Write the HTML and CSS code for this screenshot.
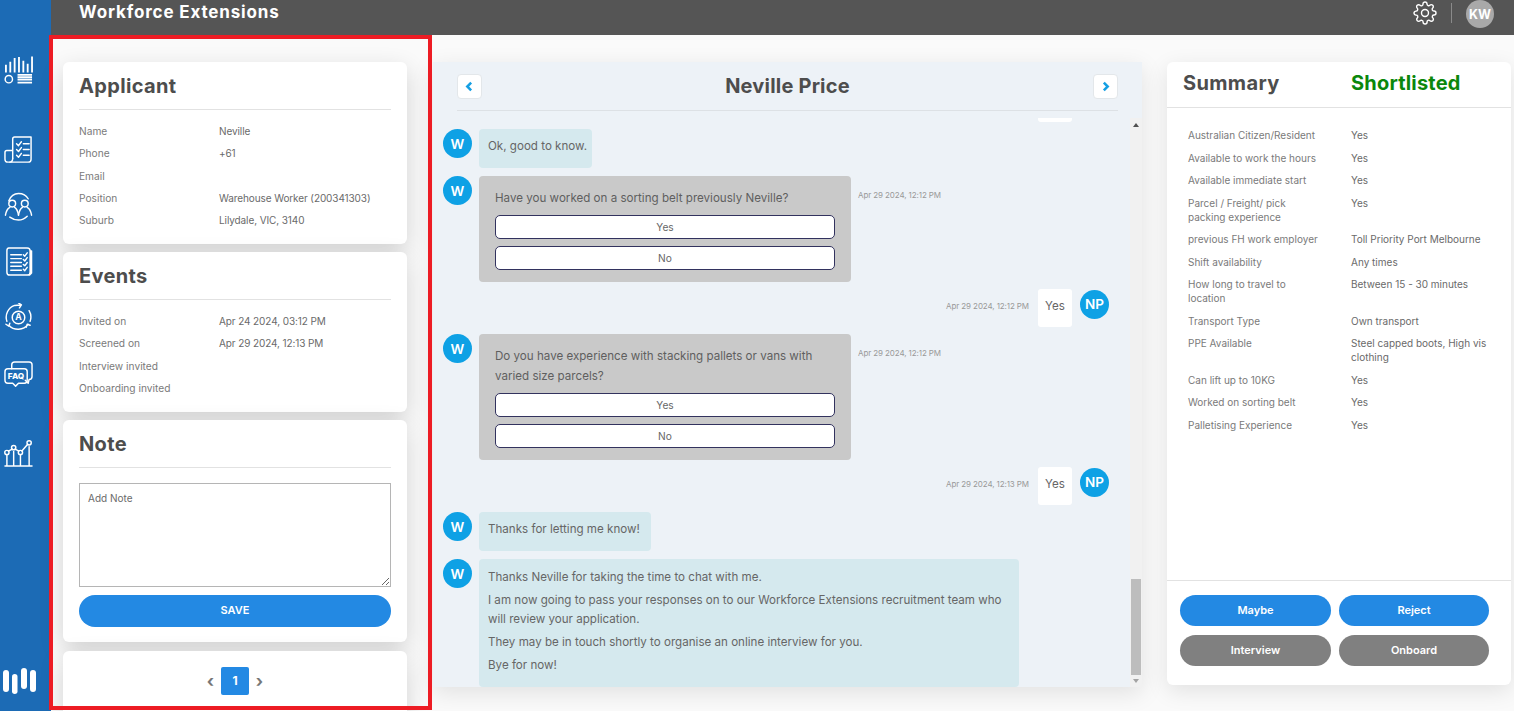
FILE: index.html
```html
<!DOCTYPE html>
<html lang="en">
<head>
<meta charset="utf-8">
<title>Workforce Extensions</title>
<link rel="stylesheet" href="styles.css">
</head>
<body>
<div class="app">
  <aside class="sidebar">
    <svg class="nav nav-a" viewBox="0 0 30 30"><g class="ln ln-bars"><path d="M2 17V9M6.500 17V6M11 17V2M15.500 17V1M20 17V5M24.500 17V8M29 17V.5"/><path d="M14 19.500h15M14 22h15M14 24.500h15M14 27.500h15"/></g><g class="ln"><circle cx="5" cy="24" r="3.800"/></g></svg>
    <svg class="nav nav-b" viewBox="0 0 30 30"><g class="ln"><path d="M9 23V3q0-2 2-2h17v23q0 3-3 3H4q-3 0-3-3v-7q0-2 2-2h6"/><path d="M9 23q0 4-3 4M13 8l2 2 3-4M20 8h6M13 14l2 2 3-4M20 14h6M13 20l2 2 3-4M20 20h6"/></g></svg>
    <svg class="nav nav-c" viewBox="0 0 30 30"><g class="ln"><circle cx="8.500" cy="12" r="3.500"/><path d="M1.500 24q1-6 4.500-8M15 24q-1-6-4-8"/><circle cx="21.500" cy="12" r="3.500"/><path d="M15 24q1-6 4-8M28.500 24q-1-6-4.500-8M5 9q3-7.500 10-7.500T25 7M6 26q4 3 9 3t9-4"/></g></svg>
    <svg class="nav nav-d" viewBox="0 0 30 30"><g class="ln"><path d="M5 1h19q3 0 3 3v22q0 3-3 3H6q-3 0-3-3V4q0-3 2-3zM27 4h1.500v23l-2 2"/><path d="M7 8h11M7 12h11M7 16h11M7 20h11M7 24h11M20 8l1.500 1.500L24 6M20 13l1.500 1.500L24 11M20 18l1.500 1.500L24 16M20 23l1.500 1.500L24 21"/></g></svg>
    <svg class="nav nav-e" viewBox="0 0 30 30"><g class="ln"><path d="M3 19A13 13 0 0 1 11 2.500l6-.5M26 8a13 13 0 0 1 1 11M5 23a13 13 0 0 0 20-1M15 0l3 2-2 3M27 23l-3-1-1 3M2 22l3 2 1-3"/><circle cx="15" cy="15" r="6.500"/></g><text class="a-mark" x="15" y="18">A</text></svg>
    <svg class="nav nav-f" viewBox="0 0 30 30"><g class="ln"><path d="M8 8V4q0-3 3-3h15q3 0 3 3v12q0 3-3 3l-1 4-3-3"/><path d="M4 8h17q3 0 3 3v9q0 3-3 3h-6l-3 3-3-3H4q-3 0-3-3v-9q0-3 3-3z"/></g><text class="faq-mark" x="12.500" y="19">FAQ</text></svg>
    <svg class="nav nav-g" viewBox="0 0 30 30"><g class="ln"><path d="M1 29h28M3 29V17M10 29V14M17 29V17M26 29V9"/><circle cx="3" cy="15" r="2.200"/><circle cx="10" cy="10" r="2.200"/><circle cx="17" cy="15" r="2.200"/><circle cx="26" cy="5" r="2.200"/><path d="M4.500 13.500l4-2M11.500 11.500l4 2M18.500 13.500l6-7"/></g></svg>
    <svg class="nav-logo" viewBox="0 0 34 26"><g class="logo-bars"><rect x="0" y="2" width="6" height="22" rx="3"/><rect x="9" y="6" width="5.500" height="20" rx="2.750"/><rect x="18" y="0" width="6" height="21" rx="3"/><rect x="27" y="2" width="6" height="22" rx="3"/></g></svg>
  </aside>

  <div class="main">
    <header class="topbar">
      <div class="brand">Workforce Extensions</div>
      <div class="top-actions">
        <svg class="gear" viewBox="0 0 24 24"><circle cx="12" cy="12" r="3.500"/><path d="M19.400 15a1.650 1.650 0 0 0 .33 1.820l.06.06a2 2 0 0 1 0 2.830 2 2 0 0 1-2.830 0l-.06-.06a1.650 1.650 0 0 0-1.820-.33 1.650 1.650 0 0 0-1 1.510V21a2 2 0 0 1-2 2 2 2 0 0 1-2-2v-.09A1.650 1.650 0 0 0 9 19.400a1.650 1.650 0 0 0-1.820.33l-.06.06a2 2 0 0 1-2.830 0 2 2 0 0 1 0-2.830l.06-.06a1.650 1.650 0 0 0 .33-1.820 1.650 1.650 0 0 0-1.510-1H3a2 2 0 0 1-2-2 2 2 0 0 1 2-2h.09A1.650 1.650 0 0 0 4.600 9a1.650 1.650 0 0 0-.33-1.820l-.06-.06a2 2 0 0 1 0-2.830 2 2 0 0 1 2.830 0l.06.06a1.650 1.650 0 0 0 1.820.33H9a1.650 1.650 0 0 0 1-1.510V3a2 2 0 0 1 2-2 2 2 0 0 1 2 2v.09a1.650 1.650 0 0 0 1 1.510 1.650 1.650 0 0 0 1.820-.33l.06-.06a2 2 0 0 1 2.830 0 2 2 0 0 1 0 2.830l-.06.06a1.650 1.650 0 0 0-.33 1.820V9a1.650 1.650 0 0 0 1.510 1H21a2 2 0 0 1 2 2 2 2 0 0 1-2 2h-.09a1.650 1.650 0 0 0-1.510 1z"/></svg>
        <span class="divider"></span>
        <span class="user-avatar">KW</span>
      </div>
    </header>

    <div class="content">
      <div class="left-col">
        <section class="card">
          <h2 class="card-title">Applicant</h2>
          <div class="rows">
            <div class="row"><span class="key">Name</span><span class="val">Neville</span></div>
            <div class="row"><span class="key">Phone</span><span class="val">+61</span></div>
            <div class="row"><span class="key">Email</span><span class="val"></span></div>
            <div class="row"><span class="key">Position</span><span class="val">Warehouse Worker (200341303)</span></div>
            <div class="row"><span class="key">Suburb</span><span class="val">Lilydale, VIC, 3140</span></div>
          </div>
        </section>
        <section class="card">
          <h2 class="card-title">Events</h2>
          <div class="rows">
            <div class="row"><span class="key">Invited on</span><span class="val">Apr 24 2024, 03:12 PM</span></div>
            <div class="row"><span class="key">Screened on</span><span class="val">Apr 29 2024, 12:13 PM</span></div>
            <div class="row"><span class="key">Interview invited</span><span class="val"></span></div>
            <div class="row"><span class="key">Onboarding invited</span><span class="val"></span></div>
          </div>
        </section>
        <section class="card note-card">
          <h2 class="card-title">Note</h2>
          <textarea class="note" placeholder="Add Note"></textarea>
          <button class="save">SAVE</button>
        </section>
        <section class="card pager-card">
          <div class="pager">
            <span class="pg-arrow">&#8249;</span>
            <span class="pg-num">1</span>
            <span class="pg-arrow">&#8250;</span>
          </div>
        </section>
      </div>

      <section class="chat">
        <div class="chat-head">
          <button class="chev"><svg viewBox="0 0 10 10"><path d="M6.500 1.500L3 5l3.500 3.500"/></svg></button>
          <h1 class="chat-name">Neville Price</h1>
          <button class="chev"><svg viewBox="0 0 10 10"><path d="M3.500 1.500L7 5 3.500 8.500"/></svg></button>
        </div>
        <div class="chat-body">
          <div class="messages">
            <div class="msg me"><div class="bubble-me"></div><span class="av av-empty"></span></div>
            <div class="msg"><span class="av">W</span><div class="bubble b-short b-ok">Ok, good to know.</div></div>
            <div class="msg">
              <span class="av">W</span>
              <div class="bubble-q">
                <p class="q">Have you worked on a sorting belt previously Neville?</p>
                <button class="opt">Yes</button>
                <button class="opt">No</button>
              </div>
              <span class="time t-q">Apr 29 2024, 12:12 PM</span>
            </div>
            <div class="msg me"><span class="time">Apr 29 2024, 12:12 PM</span><div class="bubble-me">Yes</div><span class="av">NP</span></div>
            <div class="msg">
              <span class="av">W</span>
              <div class="bubble-q">
                <p class="q">Do you have experience with stacking pallets or vans with<br>varied size parcels?</p>
                <button class="opt">Yes</button>
                <button class="opt">No</button>
              </div>
              <span class="time t-q">Apr 29 2024, 12:12 PM</span>
            </div>
            <div class="msg me"><span class="time">Apr 29 2024, 12:13 PM</span><div class="bubble-me">Yes</div><span class="av">NP</span></div>
            <div class="msg"><span class="av">W</span><div class="bubble b-short b-thanks">Thanks for letting me know!</div></div>
            <div class="msg">
              <span class="av">W</span>
              <div class="bubble b-long">
                <p>Thanks Neville for taking the time to chat with me.</p>
                <p>I am now going to pass your responses on to our Workforce Extensions recruitment team who<br>will review your application.</p>
                <p>They may be in touch shortly to organise an online interview for you.</p>
                <p>Bye for now!</p>
              </div>
            </div>
          </div>
          <div class="scrollbar">
            <span class="sb-up"></span>
            <span class="sb-thumb"></span>
            <span class="sb-down"></span>
          </div>
        </div>
      </section>

      <section class="summary">
        <div class="sum-head"><h2 class="sum-title">Summary</h2><span class="sum-status">Shortlisted</span></div>
        <div class="sum-rows">
          <div class="sum-row"><span class="key">Australian Citizen/Resident</span><span class="val">Yes</span></div>
          <div class="sum-row"><span class="key">Available to work the hours</span><span class="val">Yes</span></div>
          <div class="sum-row"><span class="key">Available immediate start</span><span class="val">Yes</span></div>
          <div class="sum-row"><span class="key">Parcel / Freight/ pick<br>packing experience</span><span class="val">Yes</span></div>
          <div class="sum-row"><span class="key">previous FH work employer</span><span class="val">Toll Priority Port Melbourne</span></div>
          <div class="sum-row"><span class="key">Shift availability</span><span class="val">Any times</span></div>
          <div class="sum-row"><span class="key">How long to travel to<br>location</span><span class="val">Between 15 - 30 minutes</span></div>
          <div class="sum-row"><span class="key">Transport Type</span><span class="val">Own transport</span></div>
          <div class="sum-row"><span class="key">PPE Available</span><span class="val">Steel capped boots, High vis<br>clothing</span></div>
          <div class="sum-row"><span class="key">Can lift up to 10KG</span><span class="val">Yes</span></div>
          <div class="sum-row"><span class="key">Worked on sorting belt</span><span class="val">Yes</span></div>
          <div class="sum-row"><span class="key">Palletising Experience</span><span class="val">Yes</span></div>
        </div>
        <div class="sum-actions">
          <button class="pill blue">Maybe</button>
          <button class="pill blue">Reject</button>
          <button class="pill grey">Interview</button>
          <button class="pill grey">Onboard</button>
        </div>
      </section>
    </div>
    <div class="highlight"></div>
  </div>
</div>
</body>
</html>
```
FILE: styles.css
```css
* { box-sizing: border-box; }
html, body { margin: 0; height: 711px; overflow: hidden; background: #fff; }
body { font-family: Inter, "Liberation Sans", sans-serif; color: #666; }
h1, h2, p { margin: 0; }
button { font-family: inherit; cursor: pointer; }

.app { display: flex; height: 711px; }

/* sidebar */
.sidebar { width: 51px; flex: none; background: #1c6bb5; display: flex; flex-direction: column; padding-left: 4px; }
.nav { width: 29px; height: 29px; display: block; flex: none; }
.ln { fill: none; stroke: #fff; stroke-width: 1.500; stroke-linecap: round; stroke-linejoin: round; }
.ln-bars { stroke-width: 1.900; stroke-linecap: butt; }
.nav-a { margin-top: 56px; }
.nav-b { margin-top: 51px; }
.nav-c { margin-top: 27px; }
.nav-d { margin-top: 26px; }
.nav-e { margin-top: 27px; }
.nav-f { margin-top: 29px; }
.nav-g { margin-top: 48px; }
.a-mark { fill: #fff; font-family: Inter, sans-serif; font-size: 9px; font-weight: 700; text-anchor: middle; }
.faq-mark { fill: #fff; font-family: Inter, sans-serif; font-size: 8.500px; font-weight: 800; text-anchor: middle; }
.nav-logo { width: 34px; height: 26px; margin: 201px 0 0 -1px; flex: none; display: block; }
.logo-bars { fill: #fff; }

/* top bar */
.main { flex: 1; min-width: 0; position: relative; display: flex; flex-direction: column; }
.topbar { height: 35px; flex: none; background: #555; display: flex; justify-content: space-between; padding: 0 20px 0 28px; }
.brand { color: #fff; font-size: 17px; font-weight: 700; line-height: 24px; letter-spacing: .85px; }
.top-actions { display: flex; align-items: flex-start; }
.gear { width: 24px; height: 24px; margin-top: 1px; fill: none; stroke: #fff; stroke-width: 1.400; }
.divider { width: 1px; height: 20px; background: #8a8a8a; margin: 3px 14px 0; }
.user-avatar { width: 28px; height: 28px; border-radius: 50%; background: #a9a9a9; color: #fff; font-size: 12.500px; font-weight: 700; display: flex; align-items: center; justify-content: center; }

/* content */
.content { flex: 1; min-height: 0; display: flex; align-items: flex-start; padding: 27px 0 0 12px; background: #fafafa; }
.highlight { position: absolute; left: -2px; top: 35px; width: 383px; height: 675px; border: 4px solid #ed1c24; pointer-events: none; }

.left-col { width: 344px; flex: none; display: flex; flex-direction: column; gap: 8px; }
.card { background: #fff; border-radius: 6px; padding: 0 16px; box-shadow: 0 8px 24px rgba(0,0,0,.16); }
.card-title { height: 48px; border-bottom: 1px solid #e2e2e2; font-size: 20px; line-height: 49px; font-weight: 700; color: #4d4d4d; letter-spacing: .35px; }
.rows { padding: 10px 0 12.500px; }
.row { display: flex; height: 22.300px; align-items: center; font-size: 10.200px; }
.key { color: #7a7a7a; }
.row .key { width: 140px; flex: none; }
.val { color: #6a6a6a; }
.row .val { font-size: 10px; letter-spacing: -.1px; }
.note-card { display: flex; flex-direction: column; padding-bottom: 15px; }
.note { display: block; width: 100%; height: 104px; margin-top: 15px; padding: 8px; border: 1px solid #b5b5b5; border-radius: 0; font-family: inherit; font-size: 10px; color: #666; background: #fff; }
.note::placeholder { color: #6a6a6a; opacity: 1; }
.save { height: 32px; margin-top: 8px; padding: 0 0 2px; border: 0; border-radius: 16px; background: #2389e3; color: #fff; font-size: 11px; font-weight: 600; }
.pager-card { height: 70px; margin-top: 1px; padding-top: 16px; }
.pager { display: flex; justify-content: center; align-items: center; height: 28px; }
.pg-arrow { width: 21px; text-align: center; color: #777; font-size: 17px; font-weight: 700; line-height: 22px; }
.pg-num { width: 28px; height: 28px; border-radius: 2px; background: #2389e3; color: #fff; font-size: 12px; font-weight: 700; display: flex; align-items: center; justify-content: center; }

/* chat */
.chat { width: 709px; height: 625px; flex: none; margin-left: 26px; background: #edf2f7; box-shadow: 0 6px 22px rgba(0,0,0,.1); display: flex; flex-direction: column; }
.chat-head { height: 49px; flex: none; margin: 0 24px; padding: 12px 0 0; border-bottom: 1px solid #dde1e5; display: flex; justify-content: space-between; align-items: flex-start; }
.chat-name { font-size: 20px; line-height: 25px; font-weight: 700; color: #4d4d4d; letter-spacing: .2px; }
.chev { width: 25px; height: 25px; padding: 6px; background: #fff; border: 1px solid #e3e7ea; border-radius: 4px; display: block; }
.chev svg { display: block; width: 11px; height: 11px; fill: none; stroke: #149fe3; stroke-width: 2.300; }
.chat-body { flex: 1; min-height: 0; margin-top: 7px; display: flex; }
.messages { flex: 1; min-width: 0; height: 100%; overflow: hidden; padding: 0 21px 0 10px; display: flex; flex-direction: column; justify-content: flex-end; gap: 7.700px; font-size: 11.600px; }
.msg { display: flex; align-items: flex-start; flex: none; }
.me { justify-content: flex-end; }
.av { width: 29px; height: 29px; flex: none; border-radius: 50%; background: #0ea1e5; color: #fff; font-size: 13.500px; font-weight: 600; display: flex; align-items: center; justify-content: center; }
.av-empty { background: transparent; }
.bubble { margin-left: 7px; background: #d5e9ee; border-radius: 4px; color: #666; line-height: 19px; }
.b-short { padding: 8px 0 12px 9px; height: 39px; white-space: nowrap; }
.b-ok { width: 113px; }
.b-thanks { width: 172px; }
.b-long { width: 540px; height: 128px; padding: 8.500px 8px 0 9px; }
.b-long p { margin-bottom: 4.300px; }
.bubble-q { width: 372px; margin-left: 7px; padding: 13px 16px 12px; background: #c9c9c9; border-radius: 4px; display: flex; flex-direction: column; gap: 7px; }
.q { color: #5f5f5f; line-height: 19.500px; margin-bottom: -.5px; }
.opt { height: 24px; padding: 0; background: #fff; border: 1px solid #32325e; border-radius: 5px; color: #666; font-size: 10.200px; }
.bubble-me { width: 34px; height: 38px; margin: -1px 8px 0 9px; padding-bottom: 4px; background: #fff; border-radius: 3px; display: flex; align-items: center; justify-content: center; color: #666; }
.time { font-size: 8px; color: #999; letter-spacing: -.1px; margin-top: 11px; }
.t-q { margin-left: 7px; margin-top: 14px; }

.scrollbar { width: 12px; flex: none; background: #f1f1f1; display: flex; flex-direction: column; align-items: center; justify-content: flex-end; padding: 5px 1px 4px; }
.sb-up { margin-bottom: auto; width: 0; height: 0; border: 3.500px solid transparent; border-top: 0; border-bottom: 4px solid #505050; }
.sb-thumb { width: 10px; height: 96px; background: #bdbdbd; }
.sb-down { width: 0; height: 0; margin-top: 4px; border: 3.500px solid transparent; border-bottom: 0; border-top: 4px solid #a3a3a3; }

/* summary */
.summary { width: 344px; height: 623px; flex: none; margin-left: 25px; background: #fff; border-radius: 6px; box-shadow: 0 6px 22px rgba(0,0,0,.1); display: flex; flex-direction: column; }
.sum-head { height: 46px; flex: none; border-bottom: 1px solid #e2e2e2; padding: 8px 0 0 16px; display: flex; align-items: flex-start; }
.sum-title { width: 168px; flex: none; font-size: 20px; line-height: 26px; font-weight: 700; color: #4d4d4d; letter-spacing: .35px; }
.sum-status { font-size: 20px; line-height: 26px; font-weight: 700; color: #0b870b; letter-spacing: .2px; }
.sum-rows { flex: 1; padding: 20px 0 0 21px; font-size: 10px; line-height: 14px; }
.sum-row { display: flex; margin-bottom: 8.500px; }
.sum-row .key { width: 163px; flex: none; }
.sum-actions { flex: none; height: 105px; border-top: 1px solid #e2e2e2; padding: 14px 22px 0 13px; display: grid; grid-template-columns: 151px 150px; grid-auto-rows: 31px; gap: 9px 8px; }
.pill { padding: 0 0 2px; border: 0; border-radius: 16px; color: #fff; font-size: 11px; font-weight: 600; }
.blue { background: #2389e3; }
.grey { background: #808080; }
```
